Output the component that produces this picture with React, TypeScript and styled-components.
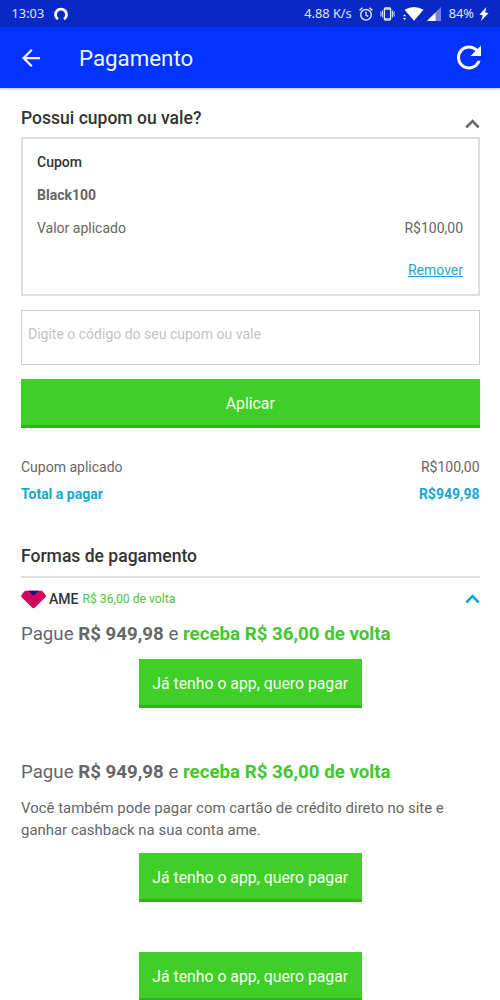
import React from 'react';
import styled, { createGlobalStyle } from 'styled-components';

const GlobalStyle = createGlobalStyle`
  * { box-sizing: border-box; }
  body { margin: 0; background: #fff; }
`;

const Screen = styled.div`
  display: flex;
  flex-direction: column;
  width: 500px;
  height: 1000px;
  overflow: hidden;
  background: #fff;
  font-family: Roboto, sans-serif;
  color: #666;
`;

const StatusBar = styled.div`
  flex: none;
  display: flex;
  align-items: center;
  height: 27px;
  padding: 0 11px 0 11.5px;
  background: #0829c6;
  color: #dfe5fb;
  font-family: 'Noto Sans', sans-serif;
  font-size: 12.8px;
  line-height: 27px;
  white-space: nowrap;
`;

const StatusGroup = styled.div`
  display: flex;
  align-items: center;
  margin-left: auto;
`;

const Glyph = styled.svg<{ $left?: number }>`
  display: block;
  flex: none;
  margin-left: ${(p) => p.$left ?? 0}px;
`;

const Percent = styled.span`
  margin-left: 8px;
`;

const AppBar = styled.header`
  flex: none;
  display: flex;
  align-items: center;
  height: 61px;
  padding: 0 19px 0 22px;
  background: #0033ff;
  box-shadow: 0 1px 2px rgba(0, 20, 140, 0.3);
  color: #fff;
`;

const Title = styled.h1`
  flex: 1;
  margin: 0 0 0 39px;
  font-size: 22.3px;
  font-weight: 400;
  line-height: 28px;
  color: #f0f3ff;
`;

const Content = styled.main`
  flex: none;
  display: flex;
  flex-direction: column;
  padding: 0 20.5px 0 21px;
`;

const SectionHead = styled.div<{ $top: number }>`
  display: flex;
  justify-content: space-between;
  align-items: center;
  height: 24px;
  margin-top: ${(p) => p.$top}px;
`;

const SectionTitle = styled.h2`
  margin: 0;
  font-size: 17.55px;
  font-weight: 500;
  line-height: 24px;
  color: #333;
`;

const ChevronDrop = styled.span`
  align-self: flex-end;
  padding-bottom: 2px;
`;

const CouponCard = styled.section`
  display: flex;
  flex-direction: column;
  height: 159px;
  margin-top: 7px;
  padding: 13px 14.5px 0 14px;
  border: 2px solid #dfdfdf;
`;

const Row = styled.div<{ $top?: number }>`
  display: flex;
  justify-content: space-between;
  margin-top: ${(p) => p.$top ?? 0}px;
  font-size: 14px;
  line-height: 20px;
`;

const CouponLabel = styled.span`
  font-weight: 500;
  color: #333;
`;

const CouponCode = styled.span`
  font-weight: 700;
`;

const RemoveLink = styled.a`
  margin-left: auto;
  color: #1ba8cd;
  text-decoration: underline;
`;

const CodeInput = styled.input`
  width: 100%;
  height: 55px;
  margin: 14px 0 0;
  padding: 0 6px 7px;
  border: 1px solid #cfcfcf;
  border-radius: 0;
  outline: none;
  background: #fff;
  font-family: inherit;
  font-size: 14px;
  &::placeholder { color: #c3c3c3; }
`;

const Button = styled.button<{ $wide?: boolean; $top: number }>`
  flex: none;
  align-self: center;
  width: ${(p) => (p.$wide ? '100%' : '222.5px')};
  height: 49px;
  margin: ${(p) => p.$top}px 0 0;
  padding: ${(p) => (p.$wide ? 2 : 4)}px 0 0;
  border: 0;
  border-bottom: 3px solid #36ae24;
  background: #40cf28;
  color: #f4fff1;
  font-family: inherit;
  font-size: 15.8px;
  white-space: nowrap;
`;

const TotalRow = styled(Row)`
  font-weight: 700;
  color: #14a7d0;
`;

const Divider = styled.hr`
  width: 100%;
  height: 2px;
  margin: 8px 0 0;
  border: 0;
  background: #dfdfdf;
`;

const Method = styled.div`
  display: flex;
  align-items: center;
  height: 24px;
  margin-top: 9px;
`;

const MethodName = styled.span`
  margin: 0 4px 0 3px;
  font-size: 14px;
  font-weight: 500;
  color: #333;
`;

const MethodPerk = styled.span`
  flex: 1;
  font-size: 12.2px;
  color: #4cc63a;
`;

const Offer = styled.p<{ $top: number }>`
  margin: ${(p) => p.$top}px 0 0;
  font-size: 18.7px;
  line-height: 26px;
  white-space: nowrap;
`;

const Perk = styled.b`
  color: #43c72f;
`;

const Note = styled.p`
  margin: 12px 0 0;
  font-size: 14.95px;
  line-height: 22px;
  white-space: nowrap;
`;

const Chevron = ({ color }: { color: string }) => (
  <Glyph width="15" height="9.5" viewBox="5.6 7.5 12.8 8.2" fill={color} stroke={color} strokeWidth="0.35">
    <path d="M7.41 15.41 12 10.83l4.59 4.58L18 14l-6-6-6 6z" />
  </Glyph>
);

const OfferLine = ({ top }: { top: number }) => (
  <Offer $top={top}>
    Pague <b>R$ 949,98</b> e <Perk>receba R$ 36,00 de volta</Perk>
  </Offer>
);

export default function App() {
  return (
    <Screen>
      <GlobalStyle />
      <StatusBar>
        <span>13:03</span>
        <Glyph $left={10} width="14" height="14" viewBox="0 0 14 14" fill="none" stroke="#fff" strokeWidth="2.8">
          <path d="M4 12.2A5.5 5.5 0 1 1 10 12.2" />
        </Glyph>
        <StatusGroup>
          <span>4.88 K/s</span>
          <Glyph $left={7} width="14" height="14" viewBox="0 0 14 14" fill="none" stroke="#dfe5fb" strokeWidth="1.4">
            <circle cx="7" cy="7.8" r="5.3" />
            <path d="M7 4.8v3.2l2.2 1.4M.6 3.4 3.6.8M13.4 3.4 10.4.8" />
          </Glyph>
          <Glyph $left={7} width="15" height="14" viewBox="0 0 15 14" fill="none" stroke="#dfe5fb" strokeWidth="1.3">
            <rect x="4.4" y="1" width="6.2" height="12" rx="1" />
            <path d="M4.4 2.2h6.2M4.4 11.8h6.2" />
            <path d="M2.6 3.5v7M.8 4.500v1.500l.7 1-.7 1v1.500M12.400 3.500v7M14.200 4.500v1.500l-.7 1 .7 1v1.500" strokeWidth="1" />
          </Glyph>
          <Glyph $left={8} width="21" height="15" viewBox="0 0 21 15" fill="#fff">
            <path d="M1.500 3.800Q11-2 20.500 3.800L11 14.800Z" />
            <path d="M0 10.200l1.500-2 1.500 2zM0 12l1.500 2L3 12z" />
          </Glyph>
          <Glyph $left={3} width="14" height="14" viewBox="0 0 14 14">
            <path d="M14 0v14H0z" fill="#7083e2" />
            <path d="M8.500 5.500V14H0z" fill="#fff" />
          </Glyph>
          <Percent>84%</Percent>
          <Glyph $left={5} width="10" height="14" viewBox="0 0 10 14" fill="#fff">
            <path d="M7.500 0 .5 7.500l3.400 1L1.800 14 9.500 6.200l-3.400-1z" />
          </Glyph>
        </StatusGroup>
      </StatusBar>
      <AppBar>
        <Glyph width="18" height="18" viewBox="4 4 16 16" fill="#f0f3ff">
          <path d="M20 11H7.83l5.59-5.59L12 4l-8 8 8 8 1.41-1.41L7.83 13H20v-2z" />
        </Glyph>
        <Title>Pagamento</Title>
        <Glyph width="24" height="24" viewBox="80 88 352 352" fill="#fff" overflow="visible">
          <path d="M256 388c-72.597 0-132-59.405-132-132 0-72.601 59.403-132 132-132 36.3 0 69.299 15.4 92.406 39.601L278 234h154V80l-51.698 51.702C348.406 99.798 304.406 80 256 80c-96.797 0-176 79.203-176 176s78.094 176 176 176c81.045 0 148.287-54.134 169.401-128H378.85c-18.745 49.561-67.138 84-122.85 84z" />
        </Glyph>
      </AppBar>
      <Content>
        <SectionHead $top={18}>
          <SectionTitle>Possui cupom ou vale?</SectionTitle>
          <ChevronDrop><Chevron color="#666" /></ChevronDrop>
        </SectionHead>
        <CouponCard>
          <Row><CouponLabel>Cupom</CouponLabel></Row>
          <Row $top={13}><CouponCode>Black100</CouponCode></Row>
          <Row $top={13}><span>Valor aplicado</span><span>R$100,00</span></Row>
          <Row $top={22}><RemoveLink>Remover</RemoveLink></Row>
        </CouponCard>
        <CodeInput placeholder="Digite o código do seu cupom ou vale" />
        <Button $wide $top={14}>Aplicar</Button>
        <Row $top={29}><span>Cupom aplicado</span><span>R$100,00</span></Row>
        <TotalRow $top={7}><span>Total a pagar</span><span>R$949,98</span></TotalRow>
        <SectionHead $top={40}>
          <SectionTitle>Formas de pagamento</SectionTitle>
        </SectionHead>
        <Divider />
        <Method>
          <Glyph width="25" height="19" viewBox="0 0 25 19">
            <path d="M5 .8h15q1.2 0 2 .9l2.400 3q1.200 1.500-.2 2.900L14 17.600q-1.500 1.300-3 0L.8 7.600Q-.5 6.200.6 4.700L3 1.700Q3.800.8 5 .8z" fill="#cf0a5c" />
            <path d="M7.200.8h10.800l-5.400 5z" fill="#1b1187" />
          </Glyph>
          <MethodName>AME</MethodName>
          <MethodPerk>R$ 36,00 de volta</MethodPerk>
          <Chevron color="#149fdc" />
        </Method>
        <OfferLine top={9.5} />
        <Button $top={12}>Já tenho o app, quero pagar</Button>
        <OfferLine top={51} />
        <Note>
          Você também pode pagar com cartão de crédito direto no site e
          <br />
          ganhar cashback na sua conta ame.
        </Note>
        <Button $top={12}>Já tenho o app, quero pagar</Button>
        <Button $top={50}>Já tenho o app, quero pagar</Button>
      </Content>
    </Screen>
  );
}
